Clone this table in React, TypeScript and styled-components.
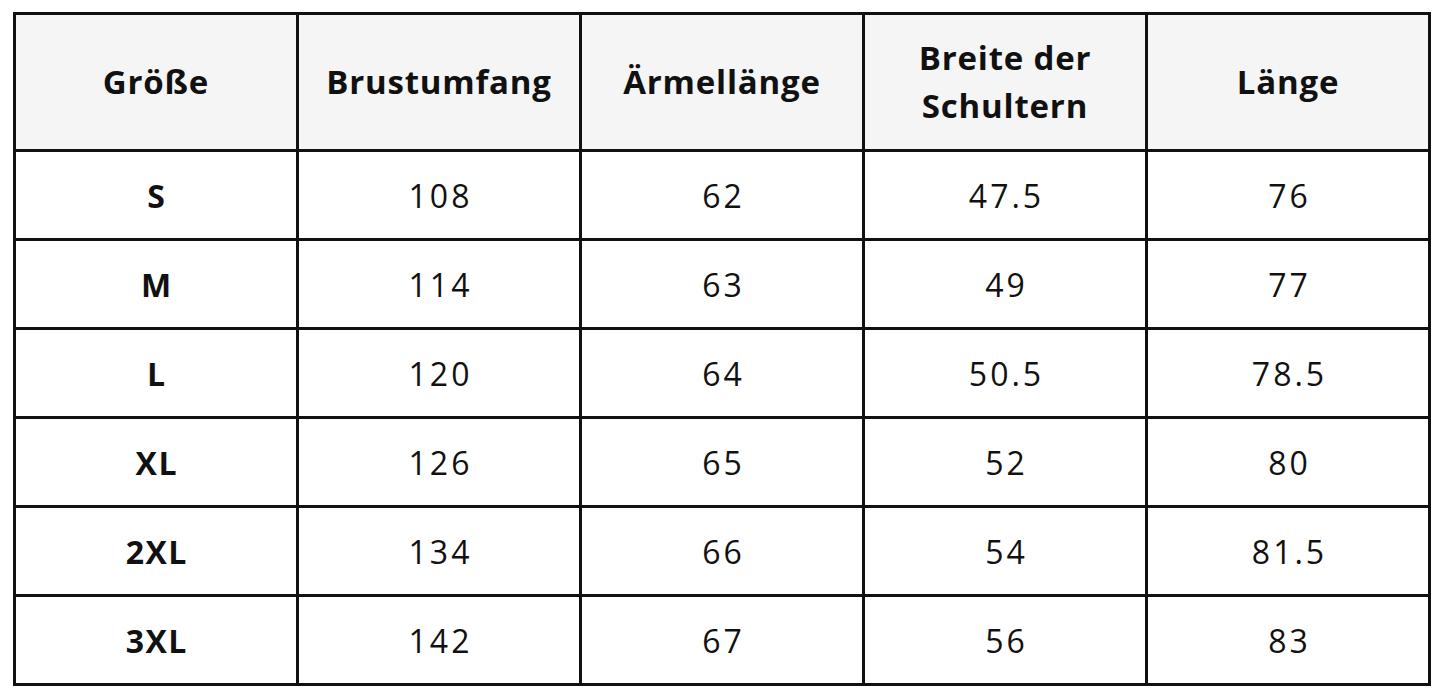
import styled, { createGlobalStyle } from "styled-components";

const GlobalStyle = createGlobalStyle`
    body {
        margin: 0;
        background: #ffffff;
        font-family: "Open Sans", "Noto Sans", sans-serif;
        color: #111111;
    }
`;

const Table = styled.div`
    display: grid;
    grid-template-columns: repeat(5, 1fr);
    grid-template-rows: 134px repeat(6, 86px);
    gap: 3px;
    padding: 3px;
    margin: 12px 0 0 13px;
    width: 1418px;
    box-sizing: border-box;
    background: #111111;
`;

const Cell = styled.div<{ $head?: boolean; $bold?: boolean }>`
    display: flex;
    align-items: center;
    justify-content: center;
    text-align: center;
    white-space: pre-line;
    background: ${(p) => (p.$head ? "#f5f5f5" : "#ffffff")};
    font-size: ${(p) => (p.$head ? "33px" : "32px")};
    font-weight: ${(p) => (p.$head || p.$bold ? 700 : 400)};
    letter-spacing: ${(p) => (p.$head ? "0.8px" : p.$bold ? "1.5px" : "3px")};
    line-height: ${(p) => (p.$head ? "48px" : "1")};
    padding-top: ${(p) => (p.$head ? "0" : "2px")};
    padding-left: ${(p) => (p.$head ? "0" : p.$bold ? "1.5px" : "3px")};
`;

const headers = ["Größe", "Brustumfang", "Ärmellänge", "Breite der\nSchultern", "Länge"];

const rows = [
    ["S", "108", "62", "47.5", "76"],
    ["M", "114", "63", "49", "77"],
    ["L", "120", "64", "50.5", "78.5"],
    ["XL", "126", "65", "52", "80"],
    ["2XL", "134", "66", "54", "81.5"],
    ["3XL", "142", "67", "56", "83"],
];

const App = () => {
    return (
        <>
            <GlobalStyle />
            <Table>
                {headers.map((h) => (
                    <Cell key={h} $head>
                        {h}
                    </Cell>
                ))}
                {rows.map((row) =>
                    row.map((v, i) => (
                        <Cell key={row[0] + i} $bold={i === 0}>
                            {v}
                        </Cell>
                    ))
                )}
            </Table>
        </>
    );
};

export default App;
